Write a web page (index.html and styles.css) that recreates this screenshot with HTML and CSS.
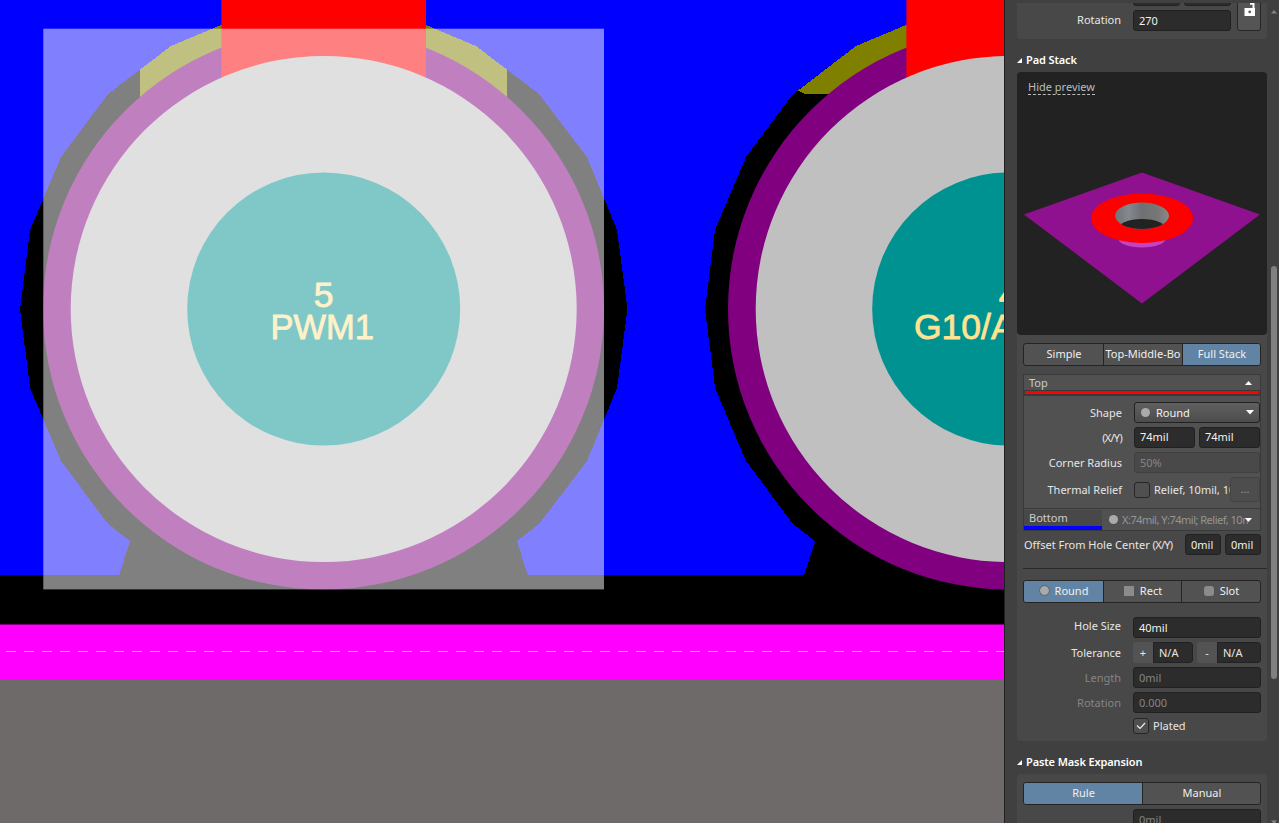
FILE: index.html
```html
<!DOCTYPE html>
<html lang="en">
<head>
<meta charset="utf-8">
<title>Pad Properties</title>
<link rel="stylesheet" href="styles.css">
</head>
<body>
<main class="app">
  <svg class="board" width="1004" height="823" viewBox="0 0 1004 823">
    <defs>
      <g id="clearance">
        <path d="M20 309 30 230 61 157 108 94 171 46 221 25H426L476 46 539 94 587 157 617 230 627.500 309 617 388 587 461 539 524 517 541 528 576H119L130 541 108 524 61 461 30 388Z"/>
      </g>
    </defs>
    <rect width="1004" height="823" fill="#000"/>
    <rect width="1004" height="575" fill="#00f"/>
    <g shape-rendering="crispEdges">
      <use href="#clearance"/>
      <use href="#clearance" x="685"/>
      <path fill="#808000" d="M140 69.600 171 46 221 25H426L476 46 507 69.600V120H140ZM798 90.500 856 46 906 25H1004V94H805Z"/>
    </g>
    <circle cx="323.500" cy="309" r="280.500" fill="#800080"/>
    <circle cx="1008.500" cy="309" r="280.500" fill="#800080"/>
    <path fill="#f00" d="M221.400 0H426V120H221.400ZM906.400 0H1004V120H906.400Z"/>
    <circle cx="323.700" cy="309" r="253" fill="#c0c0c0"/>
    <circle cx="1008.700" cy="309" r="253" fill="#c0c0c0"/>
    <circle cx="323.700" cy="309" r="136.500" fill="#009191"/>
    <circle cx="1008.700" cy="309" r="136.500" fill="#009191"/>
    <g class="pad-label">
      <text x="323.500" y="307" text-anchor="middle">5</text>
      <text x="270.500" y="339.300" textLength="103.500" lengthAdjust="spacingAndGlyphs">PWM1</text>
      <text x="1008.500" y="307" text-anchor="middle">4</text>
      <text x="914" y="339.300">G10/A</text>
    </g>
    <rect x="43.300" y="28.700" width="560.700" height="560.700" fill="#fff" fill-opacity=".5"/>
    <rect y="624.500" width="1004" height="55" fill="#f0f"/>
    <path d="M6 651.500H1004" stroke="#ef9bef" stroke-dasharray="10 8"/>
    <rect y="679" width="1004" height="144" fill="#6e6a69"/>
  </svg>

  <aside class="panel">
    <div class="content">
      <section class="card position">
        <div class="pair cut"><i class="field"></i><i class="field"></i></div>
        <div class="row"><label>Rotation</label><span class="field rot">270</span></div>
        <span class="lock"><svg width="14" height="17" viewBox="0 0 14 17"><path d="M8 3.700h3.500V9" fill="none" stroke="#fff" stroke-width="2"/><path fill="#fff" fill-rule="evenodd" d="M2.500 8h10.500v8H2.500ZM7.700 10.500a1.400 1.400 0 1 0 .01 0Z"/></svg></span>
      </section>

      <h2><svg width="5" height="5"><path d="M5 0V5H0Z"/></svg>Pad Stack</h2>
      <section class="stack">
        <div class="preview">
          <a>Hide preview</a>
          <svg width="250" height="263" viewBox="1017 72 250 263">
            <defs><linearGradient id="barrel"><stop stop-color="#707376"/><stop offset=".25" stop-color="#84898f"/><stop offset=".5" stop-color="#6e7073"/><stop offset=".8" stop-color="#777"/><stop offset="1" stop-color="#8a8a8a"/></linearGradient>
            <clipPath id="bore"><ellipse cx="1142" cy="215.800" rx="27" ry="13.200"/></clipPath></defs>
            <path fill="#90118f" d="M1142 172.500 1260 214.500 1142 303.500 1024 214.500Z"/>
            <ellipse cx="1142" cy="238" rx="24" ry="9.500" fill="#c243c6"/>
            <ellipse cx="1142" cy="218.300" rx="51" ry="24.700" fill="#f00"/>
            <ellipse cx="1142" cy="215.800" rx="27" ry="13.200" fill="url(#barrel)"/>
            <ellipse cx="1142" cy="230" rx="25" ry="11" fill="#222" clip-path="url(#bore)"/>
          </svg>
        </div>

        <div class="segments stack-mode"><span>Simple</span><span class="tight">Top-Middle-Bo</span><span class="on">Full Stack</span></div>

        <div class="layers">
          <div class="layer-head"><span>Top</span><svg width="7" height="4"><path d="M0 4 3.500 0 7 4Z"/></svg></div>
          <div class="red-line"></div>
          <div class="layer-body">
            <div class="row"><label>Shape</label><span class="field select"><i class="dot"></i><span>Round</span><svg width="8" height="5"><path d="M0 0H8L4 4.500Z"/></svg></span></div>
            <div class="row"><label class="xy">(X/Y)</label><div class="pair"><span class="field">74mil</span><span class="field">74mil</span></div></div>
            <div class="row"><label>Corner Radius</label><span class="field disabled">50%</span></div>
            <div class="row thermal"><label>Thermal Relief</label><i class="check"></i><span class="relief">Relief, 10mil, 10</span><span class="more">...</span></div>
          </div>
          <div class="bottom-layer"><span class="blue-tab">Bottom</span><i class="dot"></i><span class="summary">X:74mil, Y:74mil; Relief, 10m</span><svg width="7" height="4"><path d="M0 0H7L3.500 4Z"/></svg></div>
        </div>

        <div class="offset"><label>Offset From Hole Center <b>(X/Y)</b></label><span class="field">0mil</span><span class="field">0mil</span></div>
        <hr>
        <div class="segments hole-shape"><span class="on"><i class="dot ring"></i>Round</span><span><i class="square"></i>Rect</span><span><i class="square soft"></i>Slot</span></div>
        <div class="hole">
          <div class="row"><label class="raised">Hole Size</label><span class="field">40mil</span></div>
          <div class="row"><label>Tolerance</label><div class="tolerance"><span class="tol"><i>+</i><em>N/A</em></span><span class="tol"><i>-</i><em>N/A</em></span></div></div>
          <div class="row dim"><label>Length</label><span class="field">0mil</span></div>
          <div class="row dim"><label>Rotation</label><span class="field">0.000</span></div>
          <div class="plated"><i class="check"><svg width="10" height="8"><path d="M1 3.500 4 6.500 9 1" fill="none" stroke="#eee" stroke-width="1.200"/></svg></i><span>Plated</span></div>
        </div>
      </section>

      <h2 class="paste-title"><svg width="5" height="5"><path d="M5 0V5H0Z"/></svg>Paste Mask Expansion</h2>
      <section class="card paste">
        <div class="segments two"><span class="on">Rule</span><span>Manual</span></div>
        <div class="row dim"><label></label><span class="field">0mil</span></div>
      </section>
    </div>
    <div class="scroll"><svg width="6" height="4"><path d="M0 3.500 3 0 6 3.500Z"/></svg><i class="thumb"></i><svg width="6" height="4"><path d="M0 .5H6L3 4Z"/></svg></div>
  </aside>
</main>
</body>
</html>
```
FILE: styles.css
```css
* { box-sizing: border-box; }
body { margin: 0; overflow: hidden; background: #404040; }
.app { display: flex; width: 1279px; height: 823px; overflow: hidden; }
.board { flex: none; display: block; }
.pad-label { font: 35.5px "Liberation Sans", Arial, sans-serif; fill: #ffe391; stroke: #ffe391; stroke-width: .8; }
.panel {
  display: flex; flex: none; width: 275px; height: 823px;
  border-left: 1px solid #202020; background: #404040; color: #e6e6e6;
  font: 11px/14px "Noto Sans", "Open Sans", sans-serif;
}
.content { width: 250px; margin: 3px 0 0 12px; flex: none; height: 820px; overflow: hidden; }
i, em { font-style: normal; }
.card { background: #484848; border-radius: 4px; }
.position { position: relative; height: 36px; overflow: hidden; padding-right: 36px; border-radius: 0 0 4px 4px; }
.row { display: flex; align-items: center; height: 21px; margin-bottom: 4px; }
.row > label { width: 104px; margin-right: 12px; text-align: right; flex: none; padding-bottom: 1px; }
.field {
  display: flex; align-items: center; flex: 1; min-width: 0; height: 21px;
  padding: 0 5px; background: #2c2c2c; border: 1px solid #212121; border-radius: 3px;
  color: #f2f2f2; white-space: nowrap;
}
.cut { margin: -18px 0 4px 116px; }
.pair { display: flex; gap: 4px; flex: 1; }
.lock {
  position: absolute; right: 6px; top: -14px; width: 24px; height: 42px;
  background: #555; border: 1px solid #262626; border-radius: 3px; padding: 10px 0 0 4px;
}
h2 { display: flex; align-items: center; height: 16px; margin: 13px 0 4px; font-size: 11px; line-height: 16px; font-weight: 600; color: #fff; letter-spacing: -.12px; }
h2 svg { margin-right: 4px; fill: #fff; }
.stack { height: 669px; background: #484848; border-radius: 4px; }
.preview { position: relative; height: 263px; margin-bottom: 8px; background: #222; border-radius: 4px; }
.preview svg { display: block; }
.preview a { position: absolute; left: 11px; top: 8px; color: #bcbcbc; border-bottom: 1px dashed #bcbcbc; }
.segments {
  display: grid; height: 23px; margin: 0 6px; border: 1px solid #242424; border-radius: 3px;
  background: #525252; color: #f0f0f0; overflow: hidden;
}
.segments span { display: flex; align-items: center; justify-content: center; white-space: nowrap; overflow: hidden; padding: 0 0 2px 1px; }
.segments .tight { padding-left: 0; }
.segments span + span { border-left: 1px solid #242424; }
.segments .on { background: #6284a4; }
.stack-mode { grid-template-columns: 79px 79px 1fr; }
.hole-shape { grid-template-columns: 79px 78px 1fr; }
.two { grid-template-columns: 118px 1fr; }
.dot { width: 9px; height: 9px; border-radius: 50%; background: #aaa; flex: none; }
.ring { margin-right: 6px; outline: 1px solid #666; }
.square { width: 10px; height: 10px; margin-right: 6px; background: #8b8b8b; }
.soft { border-radius: 3px; }
.layers { height: 157px; margin: 8px 6px 0; border: 1px solid #3a3a3a; background: #515151; }
.layer-head { display: flex; align-items: center; justify-content: space-between; height: 16px; padding: 1px 8px 0 5px; border-bottom: 1px solid #3a3a3a; color: #ccc; }
.layer-head svg, .bottom-layer svg, .select svg { fill: #fff; flex: none; }
.red-line { height: 4px; border: solid #3a3a3a; border-width: 0 1px 1px; background: #f00; }
.layer-body { height: 113px; padding-top: 6px; border-top: 1px solid #3a3a3a; }
.layer-body .row > label { width: 98px; padding-bottom: 0; }
.layer-body .pair .field { padding-bottom: 1px; }
.select { background: linear-gradient(#606060, #4c4c4c); padding: 0 5px 0 6px; }
.select > span { flex: 1; padding-left: 6px; }
.disabled { background: #494949; border-color: #404040; color: #858585; }
.thermal { height: 25px; }
.check { display: grid; place-items: center; width: 16px; height: 16px; flex: none; border: 1px solid #262626; border-radius: 3px; background: #505050; }
.relief { width: 76px; margin-left: 4px; overflow: hidden; white-space: nowrap; flex: none; }
.more { flex: 1; height: 25px; line-height: 22px; text-align: center; border: 1px solid #434343; border-radius: 3px; color: #999; background: #4d4d4d; }
.bottom-layer { display: flex; align-items: center; height: 22px; border-top: 1px solid #3a3a3a; }
.blue-tab { width: 78px; height: 20px; margin-right: 7px; padding-left: 5px; line-height: 16px; background: #484848; border-bottom: 4px solid #00f; color: #ccc; flex: none; }
.summary { flex: 1; min-width: 0; margin-left: 4px; overflow: hidden; white-space: nowrap; color: #959595; letter-spacing: -.5px; }
.bottom-layer svg { margin: 0 8px 0 -3px; z-index: 1; }
.offset { display: flex; align-items: center; height: 21px; margin: 3px 6px 0 7px; }
.offset label { flex: 1; white-space: nowrap; }
.offset b, .xy { font-weight: 400; letter-spacing: -.7px; }
.offset .field { flex: none; width: 36px; margin-left: 4px; }
hr { height: 1px; border: 0; background: #292929; margin: 13px 0 11px 6px; }
.hole { padding: 14px 6px 0 0; }
.hole .row > label { padding-bottom: 0; }
.raised { transform: translateY(-2px); }
.tolerance { display: grid; flex: 1; grid-template-columns: 60px 64px; gap: 4px; }
.tol { display: flex; height: 21px; border-radius: 3px; overflow: hidden; background: #535353; }
.tol i { width: 20px; text-align: center; line-height: 21px; }
.tol em { flex: 1; padding-left: 5px; line-height: 19px; background: #2c2c2c; border: 1px solid #212121; border-radius: 0 3px 3px 0; }
.dim, .dim .field { color: #858585; }
.plated { display: flex; align-items: center; gap: 4px; margin-left: 116px; padding-top: 1px; }
.paste { height: 60px; padding-top: 8px; }
.two { margin-bottom: 4px; }
.paste .row { margin-right: 6px; }
.scroll { display: flex; flex-direction: column; align-items: center; margin-left: 4px; width: 6px; padding-top: 10px; }
.scroll svg { fill: #858585; flex: none; }
.thumb { width: 6px; height: 413px; margin: 252px 0 141px; border-radius: 3px; background: #808080; flex: none; }
```
